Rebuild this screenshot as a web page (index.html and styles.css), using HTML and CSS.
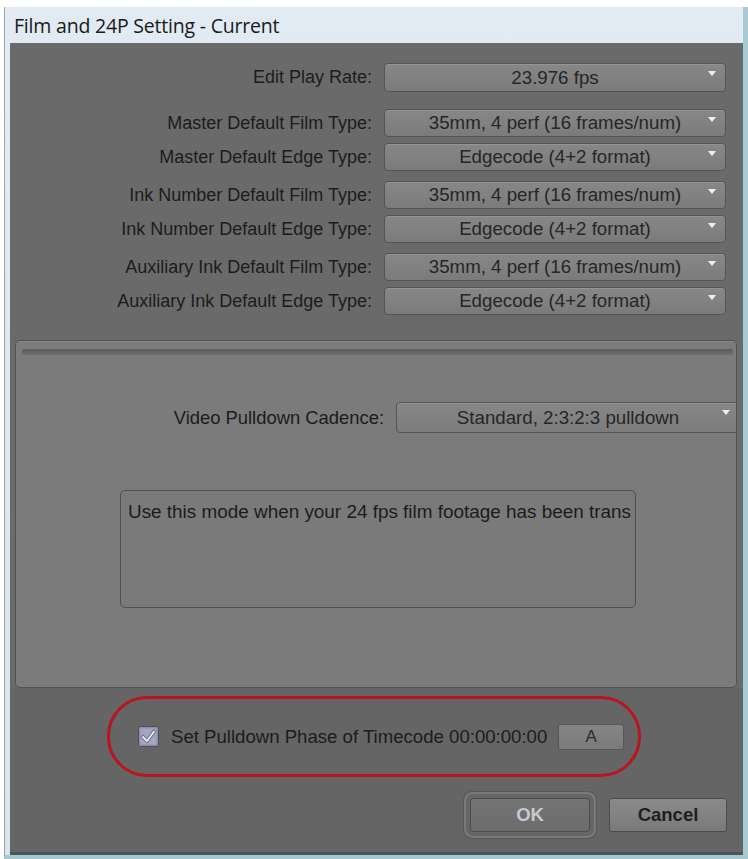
FILE: index.html
```html
<!DOCTYPE html>
<html lang="en">
<head>
<meta charset="utf-8">
<title>Film and 24P Setting - Current</title>
<link rel="stylesheet" href="styles.css">
</head>
<body>
<div class="window">
  <div class="titlebar">Film and 24P Setting - Current</div>
  <div class="content">
    <div class="settings">
      <div class="group">
        <div class="row row-tall"><span class="label">Edit Play Rate:</span><div class="select">23.976 fps<i class="arrow"></i></div></div>
      </div>
      <div class="group">
        <div class="row"><span class="label">Master Default Film Type:</span><div class="select">35mm, 4 perf (16 frames/num)<i class="arrow"></i></div></div>
        <div class="row"><span class="label">Master Default Edge Type:</span><div class="select">Edgecode (4+2 format)<i class="arrow"></i></div></div>
      </div>
      <div class="group">
        <div class="row"><span class="label">Ink Number Default Film Type:</span><div class="select">35mm, 4 perf (16 frames/num)<i class="arrow"></i></div></div>
        <div class="row"><span class="label">Ink Number Default Edge Type:</span><div class="select">Edgecode (4+2 format)<i class="arrow"></i></div></div>
      </div>
      <div class="group">
        <div class="row"><span class="label">Auxiliary Ink Default Film Type:</span><div class="select">35mm, 4 perf (16 frames/num)<i class="arrow"></i></div></div>
        <div class="row"><span class="label">Auxiliary Ink Default Edge Type:</span><div class="select">Edgecode (4+2 format)<i class="arrow"></i></div></div>
      </div>
    </div>

    <div class="panel">
      <div class="stripe"></div>
      <div class="cadence">
        <span class="label label-cadence">Video Pulldown Cadence:</span>
        <div class="select select-cadence">Standard, 2:3:2:3 pulldown<i class="arrow"></i></div>
      </div>
      <div class="desc">Use this mode when your 24 fps film footage has been trans</div>
    </div>

    <div class="footer">
      <div class="highlight">
        <svg class="checkbox" width="21" height="21" viewBox="0 0 21 21" aria-hidden="true">
          <rect x="0.5" y="0.5" width="20" height="20" rx="2" fill="#8e90a8" stroke="#4c4e5a"/>
          <rect x="2.5" y="2.5" width="16" height="16" rx="1" fill="#a3a6c0"/>
          <path d="M5 11 L9 15 L16 5.5" fill="none" stroke="#5d6078" stroke-width="3.6" stroke-linecap="round" stroke-linejoin="round"/>
          <path d="M5 11 L9 15 L16 5.5" fill="none" stroke="#e6eaf2" stroke-width="2" stroke-linecap="round" stroke-linejoin="round"/>
        </svg>
        <span class="phase-label">Set Pulldown Phase of Timecode 00:00:00:00</span>
        <div class="abtn">A</div>
      </div>
      <div class="buttons">
        <div class="btn btn-ok">OK</div>
        <div class="btn btn-cancel">Cancel</div>
      </div>
    </div>
  </div>
</div>
</body>
</html>
```

FILE: styles.css
```css
html, body {
  margin: 0;
  padding: 0;
  background: #ffffff;
}

body {
  font-family: "Liberation Sans", Arial, sans-serif;
}

.window {
  margin: 7px 0 0 4px;
  width: 744px;
  height: 852px;
  box-sizing: border-box;
  border-left: 1px solid #9aa4ad;
  border-right: 5px solid #a6cbd6;
  border-bottom: 4px solid #a2c9d2;
  padding-left: 5px;
  background: linear-gradient(#e2ebf3, #d8e5ef);
  display: flex;
  flex-direction: column;
}

.titlebar {
  height: 36px;
  flex: none;
  display: flex;
  align-items: center;
  padding-left: 4px;
  box-sizing: border-box;
  font-family: "Open Sans", "Noto Sans", sans-serif;
  font-size: 19.5px;
  letter-spacing: -0.2px;
  color: #1a1a1a;
}

.content {
  flex: 1;
  display: flex;
  flex-direction: column;
  background: #6a6a6a;
  border-bottom: 3px solid #4f5354;
}

/* ---------- top settings ---------- */
.settings {
  padding-top: 20px;
  display: flex;
  flex-direction: column;
  gap: 10px;
}

.settings .group:first-child {
  margin-bottom: 7px;
}

.group {
  display: flex;
  flex-direction: column;
  gap: 6px;
}

.row {
  display: flex;
  align-items: center;
  gap: 12px;
  height: 28px;
}

.row-tall {
  height: 29px;
}

.label {
  width: 362px;
  flex: none;
  text-align: right;
  white-space: nowrap;
  font-size: 18px;
  color: #1c1c1c;
}

.select {
  position: relative;
  width: 342px;
  height: 100%;
  box-sizing: border-box;
  border: 1px solid #555555;
  border-radius: 4px;
  background: linear-gradient(#878787, #7b7b7b);
  box-shadow: inset 0 1px 0 rgba(255, 255, 255, 0.12);
  display: flex;
  align-items: center;
  justify-content: center;
  font-size: 18.7px;
  color: #262626;
  white-space: nowrap;
}

.arrow {
  position: absolute;
  right: 9px;
  top: 7px;
  width: 0;
  height: 0;
  border-left: 4.5px solid transparent;
  border-right: 4.5px solid transparent;
  border-top: 5px solid #eeeeee;
}

/* ---------- panel ---------- */
.panel {
  margin: 25px 6px 0 5px;
  height: 348px;
  flex: none;
  box-sizing: border-box;
  border: 1px solid #525252;
  border-radius: 5px;
  background: #7b7b7b;
  box-shadow: inset 0 1px 0 #888888;
  overflow: hidden;
}

.stripe {
  margin: 8px 3px 0 6px;
  height: 6px;
  border-radius: 2px;
  background: linear-gradient(#5a5a5a, #6f6f6f);
}

.cadence {
  margin-top: 47px;
  height: 31px;
  display: flex;
  align-items: center;
  gap: 12px;
}

.label-cadence {
  width: 368px;
  font-size: 18.4px;
}

.select-cadence {
  width: auto;
  flex: 1;
  margin-right: -4px;
  border-radius: 4px 0 0 4px;
}

.desc {
  margin: 57px 0 0 104px;
  width: 516px;
  height: 118px;
  box-sizing: border-box;
  border: 1px solid #505050;
  border-radius: 5px;
  background: #7a7a7a;
  padding: 10px 7px;
  font-size: 18.9px;
  line-height: 21px;
  color: #1c1c1c;
  white-space: nowrap;
  overflow: hidden;
}

/* ---------- footer ---------- */
.footer {
  flex: 1;
  background: #656565;
  display: flex;
  flex-direction: column;
}

.highlight {
  margin: 8px 0 0 97px;
  width: 534px;
  height: 81px;
  box-sizing: border-box;
  border: 3px solid #b8161f;
  border-radius: 40px;
  display: flex;
  align-items: center;
  padding-left: 28px;
}

.checkbox {
  flex: none;
  display: block;
}

.phase-label {
  margin-left: 12px;
  font-size: 18.6px;
  color: #1c1c1c;
  white-space: nowrap;
}

.abtn {
  margin-left: 11px;
  width: 66px;
  height: 26px;
  box-sizing: border-box;
  border: 1px solid #565656;
  border-radius: 3px;
  background: linear-gradient(#858585, #7a7a7a);
  display: flex;
  align-items: center;
  justify-content: center;
  font-size: 17px;
  color: #2a2a2a;
}

.buttons {
  margin-top: 21px;
  padding-right: 16px;
  display: flex;
  justify-content: flex-end;
  gap: 19px;
}

.btn {
  height: 34px;
  box-sizing: border-box;
  border: 1px solid #4c4c4c;
  border-radius: 3px;
  background: linear-gradient(#8a8a8a, #7a7a7a);
  display: flex;
  align-items: center;
  justify-content: center;
  font-size: 18.5px;
  font-weight: bold;
}

.btn-ok {
  width: 120px;
  color: #c6cad2;
  background: linear-gradient(#747474, #6c6c6c);
  box-shadow: 0 0 0 4px #666666, 0 0 0 6px #797979, 0 0 0 7px #585858;
}

.btn-cancel {
  width: 118px;
  color: #1e1e1e;
}
```
